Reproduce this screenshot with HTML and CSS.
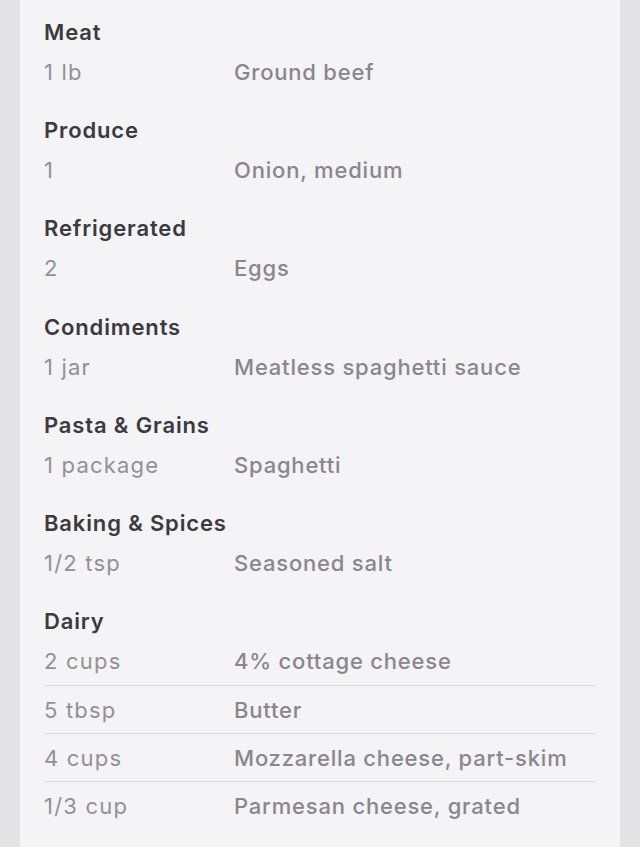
FILE: index.html
```html
<!DOCTYPE html>
<html lang="en">
<head>
<meta charset="utf-8">
<title>Ingredients</title>
<link rel="stylesheet" href="styles.css">
</head>
<body>
<main class="card">
  <section class="group">
    <h2 class="heading">Meat</h2>
    <div class="row"><span class="qty">1 lb</span><span class="name">Ground beef</span></div>
  </section>
  <section class="group">
    <h2 class="heading">Produce</h2>
    <div class="row"><span class="qty">1</span><span class="name">Onion, medium</span></div>
  </section>
  <section class="group">
    <h2 class="heading">Refrigerated</h2>
    <div class="row"><span class="qty">2</span><span class="name">Eggs</span></div>
  </section>
  <section class="group">
    <h2 class="heading">Condiments</h2>
    <div class="row"><span class="qty">1 jar</span><span class="name">Meatless spaghetti sauce</span></div>
  </section>
  <section class="group">
    <h2 class="heading">Pasta &amp; Grains</h2>
    <div class="row"><span class="qty">1 package</span><span class="name">Spaghetti</span></div>
  </section>
  <section class="group">
    <h2 class="heading">Baking &amp; Spices</h2>
    <div class="row"><span class="qty">1/2 tsp</span><span class="name">Seasoned salt</span></div>
  </section>
  <section class="group">
    <h2 class="heading">Dairy</h2>
    <div class="row"><span class="qty">2 cups</span><span class="name">4% cottage cheese</span></div>
    <div class="row"><span class="qty">5 tbsp</span><span class="name">Butter</span></div>
    <div class="row"><span class="qty">4 cups</span><span class="name">Mozzarella cheese, part-skim</span></div>
    <div class="row"><span class="qty">1/3 cup</span><span class="name">Parmesan cheese, grated</span></div>
  </section>
</main>
</body>
</html>
```
FILE: styles.css
```css
html, body {
  margin: 0;
  padding: 0;
  background: #e4e4e6;
}
body {
  font-family: Inter, "Liberation Sans", Arial, sans-serif;
  min-height: 847px;
}
.card {
  margin: 0 20px;
  min-height: 847px;
  box-sizing: border-box;
  background: #f4f3f6;
  padding: 16px 24px 0;
  display: flex;
  flex-direction: column;
  gap: 18.2px;
}
.group {
  display: flex;
  flex-direction: column;
}
.heading {
  margin: 0;
  height: 32px;
  line-height: 32px;
  font-size: 22px;
  font-weight: 600;
  color: #3b3a3f;
  letter-spacing: 0.85px;
}
.row {
  display: flex;
  align-items: center;
  height: 48px;
  box-sizing: border-box;
  font-size: 22px;
}
.row + .row {
  border-top: 1px solid #dddbe0;
}
.qty {
  width: 190px;
  flex: none;
  color: #929196;
  font-weight: 400;
  letter-spacing: 1.2px;
}
.name {
  color: #89868e;
  font-weight: 500;
  letter-spacing: 0.8px;
}
```
